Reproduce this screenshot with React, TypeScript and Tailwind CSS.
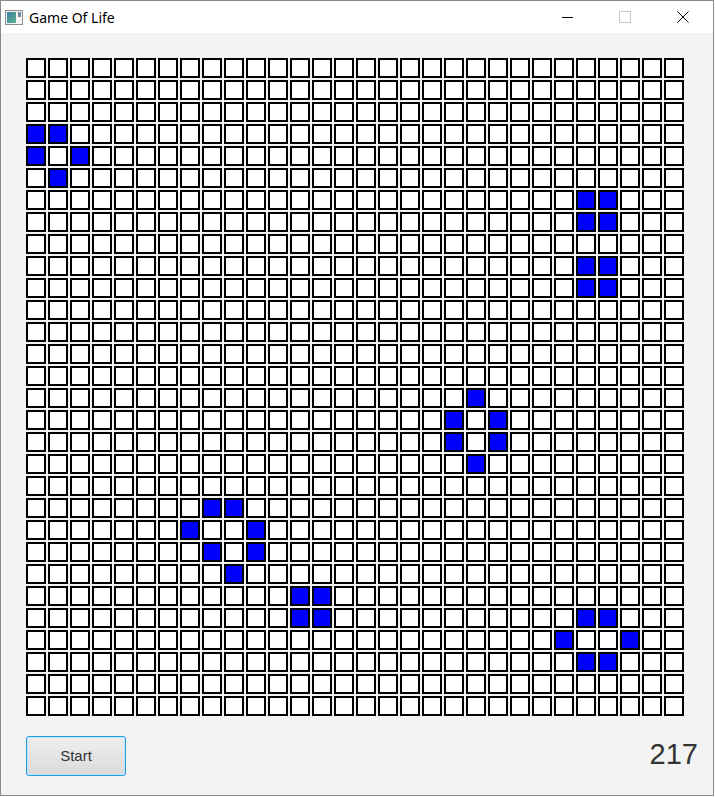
import React from 'react';

const SIZE = 30;

// live cells as [row, col]
const alive: [number, number][] = [
  [3, 0], [3, 1], [4, 0], [4, 2], [5, 1],
  [6, 25], [6, 26], [7, 25], [7, 26],
  [9, 25], [9, 26], [10, 25], [10, 26],
  [15, 20], [16, 19], [16, 21], [17, 19], [17, 21], [18, 20],
  [20, 8], [20, 9], [21, 7], [21, 10], [22, 8], [22, 10], [23, 9],
  [24, 12], [24, 13], [25, 12], [25, 13],
  [25, 25], [25, 26], [26, 24], [26, 27], [27, 25], [27, 26],
];

const liveSet = new Set(alive.map(([r, c]) => r * SIZE + c));

function AppIcon() {
  return (
    <svg width="18" height="15" viewBox="0 0 18 15">
      <rect x="0.5" y="0.5" width="17" height="14" fill="#f4f4f4" stroke="#8c8c8c" />
      <defs>
        <linearGradient id="g" x1="0" y1="0" x2="1" y2="1">
          <stop offset="0" stopColor="#3a7fa8" />
          <stop offset="1" stopColor="#5fb28a" />
        </linearGradient>
      </defs>
      <rect x="2" y="2" width="9" height="11" fill="url(#g)" />
      <rect x="13" y="2" width="3" height="5" fill="#6a8fa3" />
    </svg>
  );
}

export default function App() {
  return (
    <div className="h-[797px] w-[715px] bg-white" style={{ fontFamily: '"Liberation Sans", Arial, sans-serif' }}>
      <div className="flex h-[796px] w-[714px] flex-col border border-[#8a8a8a]">
        {/* Title bar */}
        <div className="flex h-[32px] shrink-0 items-center bg-white">
          <div className="ml-[4px] mt-[1px] flex items-center">
            <AppIcon />
          </div>
          <span className="ml-[6px] text-[14px] text-black" style={{ fontFamily: '"Noto Sans", sans-serif' }}>
            Game Of Life
          </span>
          <div className="ml-auto mr-px flex h-full items-center">
            <div className="flex w-[58px] items-center justify-center">
              <div className="h-px w-[11px] bg-black" />
            </div>
            <div className="flex w-[58px] items-center justify-center">
              <div className="h-[12px] w-[12px] border border-[#c8c8c8]" />
            </div>
            <div className="flex w-[58px] items-center justify-center">
              <svg width="12" height="12" viewBox="0 0 12 12">
                <path d="M0.5 0.5 L11.5 11.5 M11.5 0.5 L0.5 11.5" stroke="#000" strokeWidth="1" />
              </svg>
            </div>
          </div>
        </div>

        {/* Content */}
        <div className="flex flex-1 flex-col bg-[#f3f3f3] pl-[25px] pr-[15px] pt-[25px]">
          <div className="grid grid-cols-[repeat(30,20px)] gap-[2px]">
            {Array.from({ length: SIZE * SIZE }, (_, i) => (
              <div
                key={i}
                className={`h-5 w-5 border-2 border-black ${liveSet.has(i) ? 'bg-[#0000ff]' : 'bg-white'}`}
              />
            ))}
          </div>

          <div className="mt-[20px] flex items-center justify-between">
            <button className="flex h-[40px] w-[100px] items-center justify-center rounded-[3px] border border-[#1aa2e0] bg-gradient-to-b from-[#f0f0f0] to-[#dadada] text-[15px] text-[#333] shadow-[inset_0_0_0_1px_#bfe3f5]">
              Start
            </button>
            <span className="mt-[-3px] text-[29px] leading-none text-[#333]">217</span>
          </div>
        </div>
      </div>
    </div>
  );
}
